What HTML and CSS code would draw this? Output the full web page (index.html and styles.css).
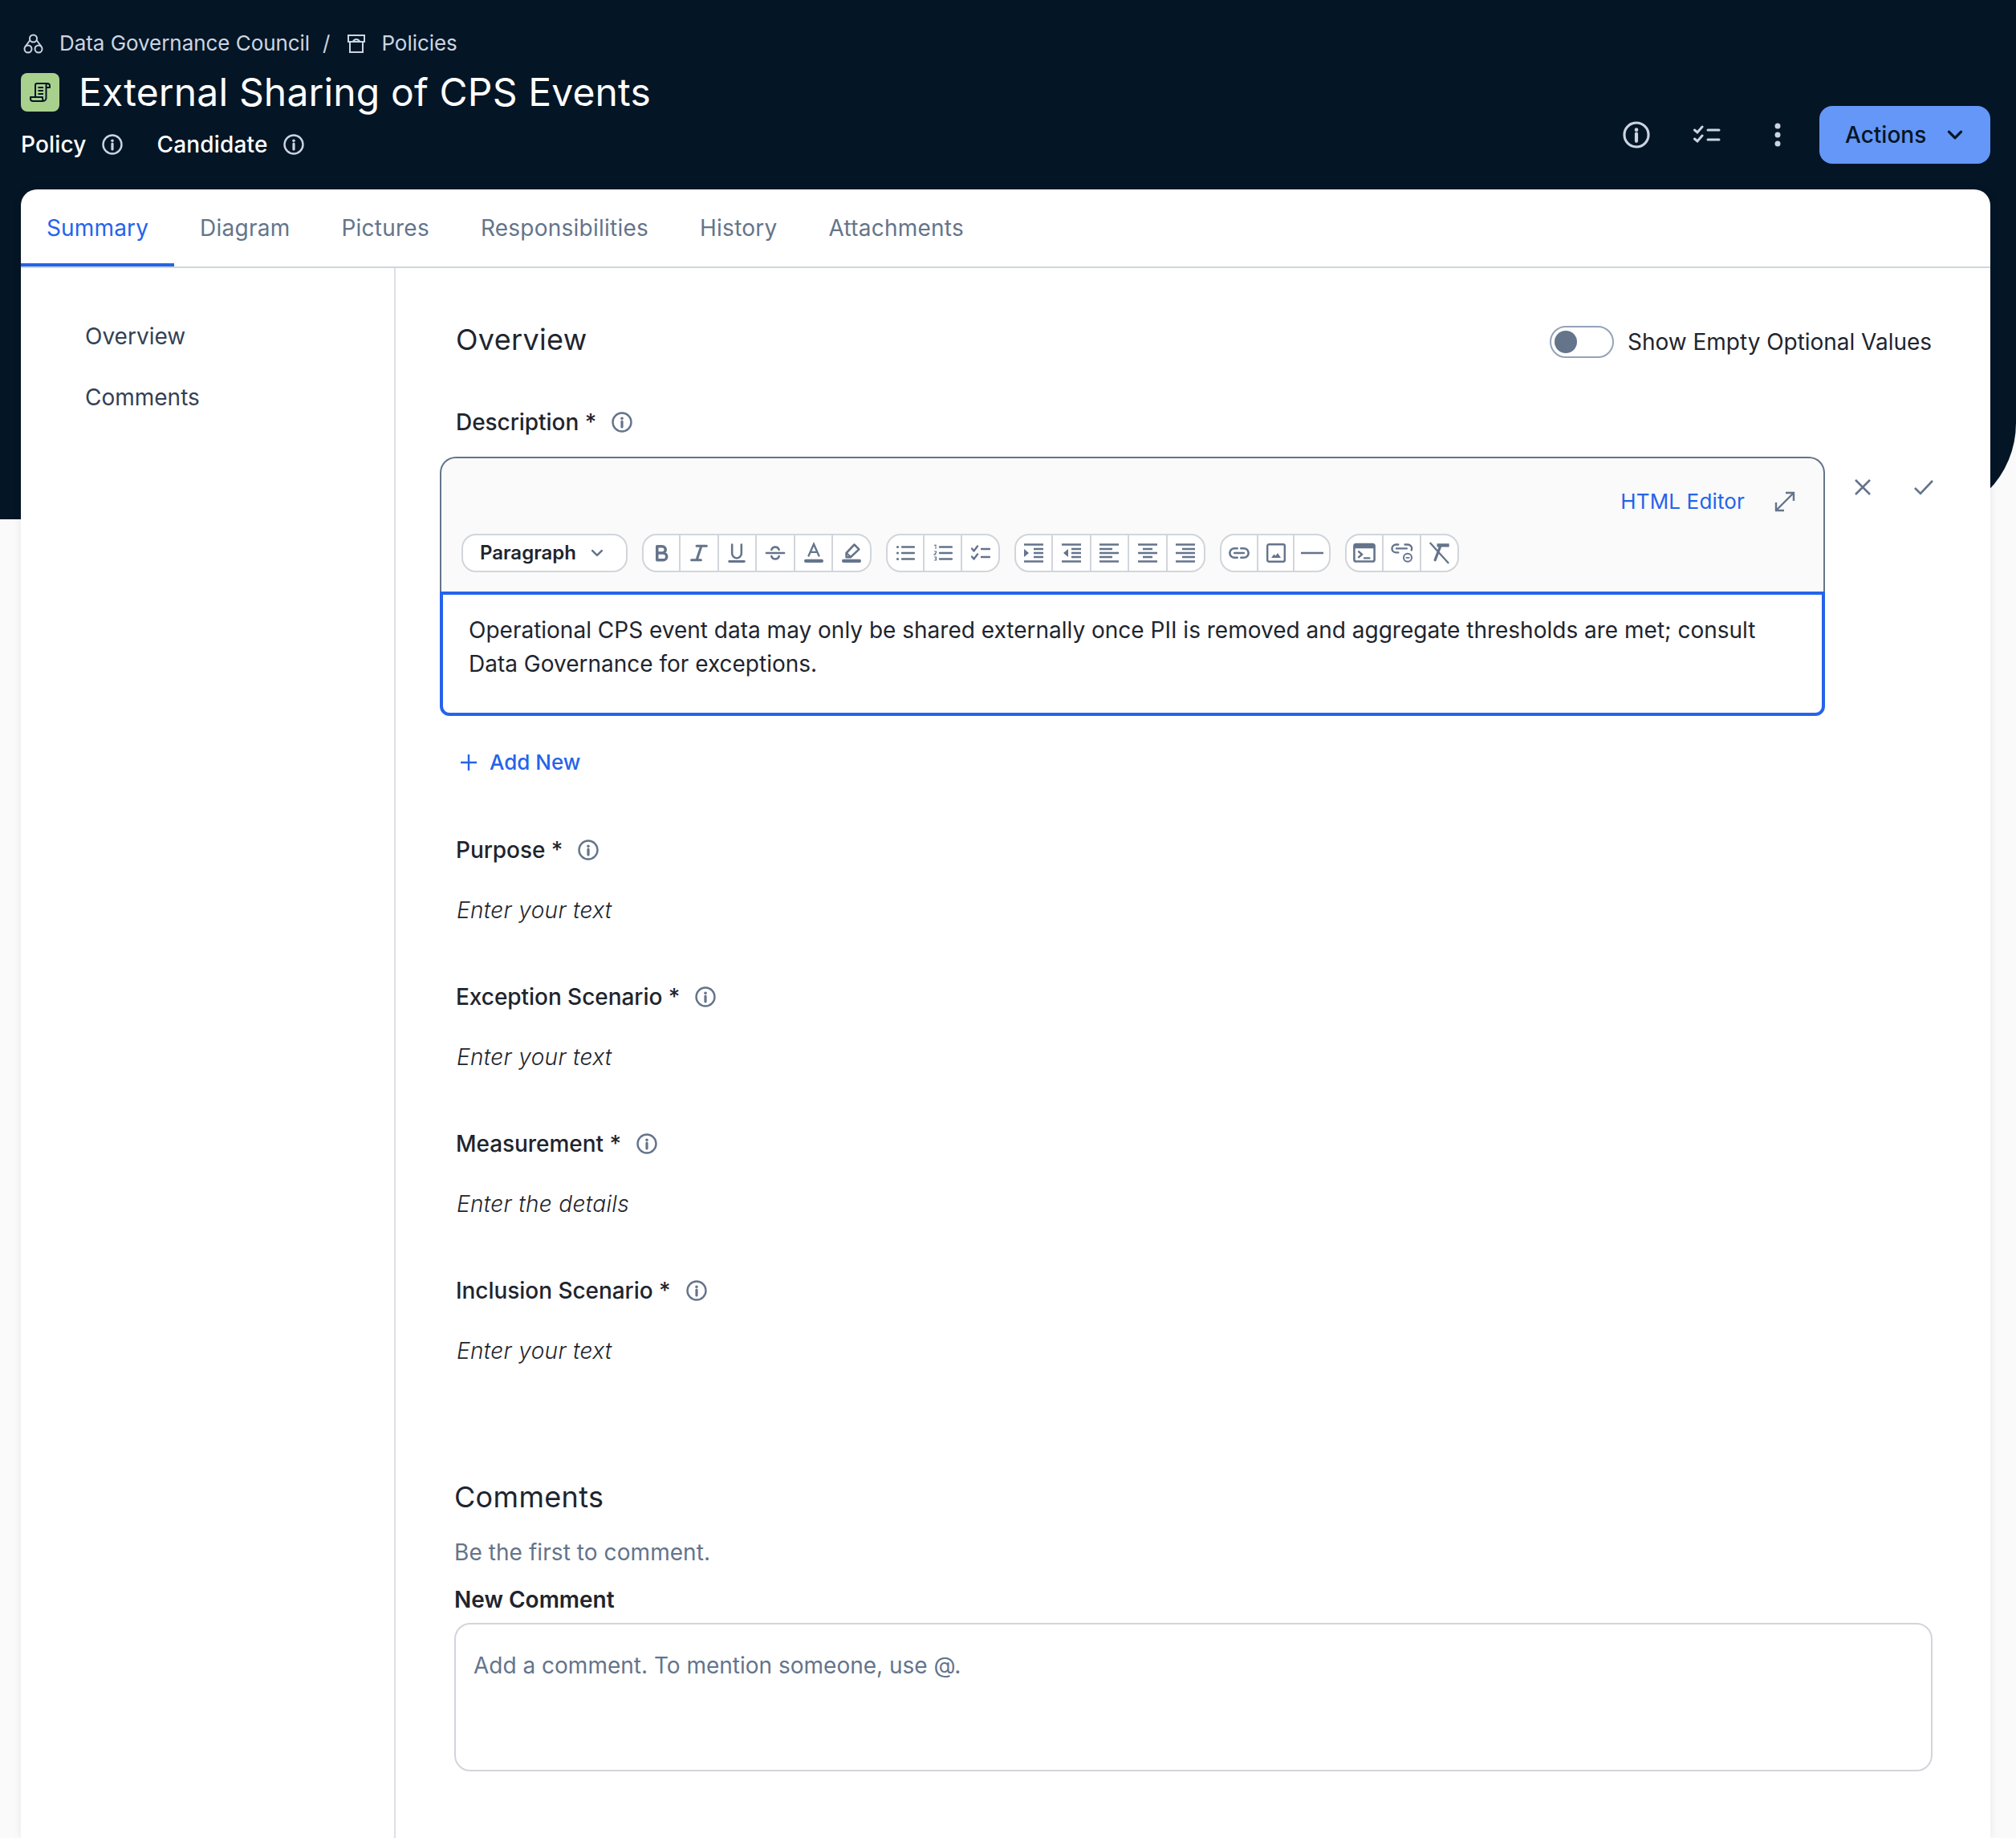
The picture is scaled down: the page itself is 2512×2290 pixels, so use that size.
FILE: index.html
```html
<!DOCTYPE html>
<html lang="en">
<head>
<meta charset="utf-8">
<title>External Sharing of CPS Events</title>
<link rel="stylesheet" href="styles.css">
</head>
<body>
<svg class="defs" width="0" height="0" aria-hidden="true">
  <symbol id="info" viewBox="0 0 26 26"><circle cx="13" cy="13" r="11.5" fill="none" stroke="currentColor" stroke-width="2.4"/><circle cx="13" cy="8.2" r="1.8" fill="currentColor"/><path d="M13 12v7" stroke="currentColor" stroke-width="3.2" stroke-linecap="round" fill="none"/></symbol>
  <symbol id="b" viewBox="0 0 24 24"><path d="M7.5 5H13a3.5 3.5 0 0 1 0 7H7.5zM7.5 12H14a3.6 3.6 0 0 1 0 7.5H7.5z" fill="none" stroke="currentColor" stroke-width="3" stroke-linejoin="round"/></symbol>
  <symbol id="i" viewBox="0 0 24 24"><path d="M9.5 4.5H20M4 19.5h10M14.5 4.5L9.500 19.500" fill="none" stroke="currentColor" stroke-width="2.700" stroke-linecap="round"/></symbol>
  <symbol id="u" viewBox="0 0 24 24"><path d="M7 3v9.500a5 5 0 0 0 10 0V3" fill="none" stroke="currentColor" stroke-width="2.200" stroke-linecap="round"/><path d="M4 21h16" stroke="currentColor" stroke-width="2.400" stroke-linecap="round"/></symbol>
  <symbol id="s" viewBox="0 0 24 24"><path d="M2.500 12h19M8 8.500a4.200 4.200 0 0 1 8 0M8 15.500a4.200 4.200 0 0 0 8 0" fill="none" stroke="currentColor" stroke-width="2.200" stroke-linecap="round"/></symbol>
  <symbol id="tc" viewBox="0 0 24 24"><path d="M6.500 15L12 2.500 17.500 15M8.500 11h7" fill="none" stroke="currentColor" stroke-width="2" stroke-linecap="round"/><path d="M3.500 20.500h17" stroke="currentColor" stroke-width="3.600" stroke-linecap="round"/></symbol>
  <symbol id="hl" viewBox="0 0 24 24"><path d="M15 3l5 5-9 8.500H6.500V12z" fill="none" stroke="currentColor" stroke-width="2.200" stroke-linejoin="round"/><path d="M6.500 12l5 4.500" stroke="currentColor" stroke-width="2"/><path d="M3.500 20.500h17" stroke="currentColor" stroke-width="3.600" stroke-linecap="round"/></symbol>
  <symbol id="ul" viewBox="0 0 24 24"><circle cx="2.500" cy="4.500" r="1.600" fill="currentColor"/><circle cx="2.500" cy="12" r="1.600" fill="currentColor"/><circle cx="2.500" cy="19.500" r="1.600" fill="currentColor"/><path d="M8 4.500H23M8 12H23M8 19.500H23" stroke="currentColor" stroke-width="2.400" stroke-linecap="round"/></symbol>
  <symbol id="ol" viewBox="0 0 24 24"><path d="M1 2.500L3 2v5M1 10h2.500v1.500L1 14h2.500M1 17h2.500v2H2h1.500v2H1" fill="none" stroke="currentColor" stroke-width="1.100"/><path d="M8 4.500H23M8 12H23M8 19.500H23" stroke="currentColor" stroke-width="2.400" stroke-linecap="round"/></symbol>
  <symbol id="cl" viewBox="0 0 24 24"><path d="M1 6.500l2.500 3 4.500-6M1 16.500l2.500 3 4.500-6" fill="none" stroke="currentColor" stroke-width="2.400" stroke-linecap="round" stroke-linejoin="round"/><path d="M13 7H23M13 17H23" stroke="currentColor" stroke-width="2.400" stroke-linecap="round"/></symbol>
  <symbol id="ind" viewBox="0 0 24 24"><path d="M0 1.500h24M12 7h12M12 12h12M12 17h12M0 22.500h24" stroke="currentColor" stroke-width="2.400"/><path d="M0 7l6 5-6 5z" fill="currentColor"/></symbol>
  <symbol id="out" viewBox="0 0 24 24"><path d="M0 1.500h24M12 7h12M12 12h12M12 17h12M0 22.500h24" stroke="currentColor" stroke-width="2.400"/><path d="M8 7l-6 5 6 5z" fill="currentColor"/></symbol>
  <symbol id="al" viewBox="0 0 24 24"><path d="M0 1.500h24M0 7h16M0 12h24M0 17h16M0 22.500h24" stroke="currentColor" stroke-width="2.400"/></symbol>
  <symbol id="ac" viewBox="0 0 24 24"><path d="M0 1.500h24M6 7h12M0 12h24M6 17h12M0 22.500h24" stroke="currentColor" stroke-width="2.400"/></symbol>
  <symbol id="ar" viewBox="0 0 24 24"><path d="M0 1.500h24M8 7h16M0 12h24M8 17h16M0 22.500h24" stroke="currentColor" stroke-width="2.400"/></symbol>
  <symbol id="lnk" viewBox="0 0 24 24"><path d="M10 7H7a5 5 0 0 0 0 10h3M14 7h3a5 5 0 0 1 0 10h-3M7 12h10" fill="none" stroke="currentColor" stroke-width="2.200" stroke-linecap="round"/></symbol>
  <symbol id="img" viewBox="0 0 24 24"><rect x="1.200" y="1.200" width="21.600" height="21.600" rx="2" fill="none" stroke="currentColor" stroke-width="2.400"/><path d="M6 18l3.500-4.500 2 2 2.500-3.500 4 6z" fill="currentColor"/></symbol>
  <symbol id="hr" viewBox="0 0 24 24"><path d="M0 12h24" stroke="currentColor" stroke-width="2.200"/></symbol>
  <symbol id="code" viewBox="0 0 24 24"><rect x="1.200" y="2.500" width="21.600" height="18.500" rx="2" fill="none" stroke="currentColor" stroke-width="2.200"/><path d="M1.500 3.500h21v3.500h-21z" fill="currentColor"/><path d="M6 10.500l3.500 3-3.500 3M12 17.500h5.500" fill="none" stroke="currentColor" stroke-width="2" stroke-linecap="round"/></symbol>
  <symbol id="unl" viewBox="0 0 24 24"><path d="M8 3H5.500a4.200 4.200 0 0 0 0 8.500H8M15 3h3a4.200 4.200 0 0 1 4 6M6 7.200h11" fill="none" stroke="currentColor" stroke-width="2" stroke-linecap="round"/><circle cx="18" cy="17" r="4.300" fill="none" stroke="currentColor" stroke-width="1.700"/><path d="M16 17h4" stroke="currentColor" stroke-width="1.400"/></symbol>
  <symbol id="clr" viewBox="0 0 24 24"><path d="M2 1.500l19 21" stroke="currentColor" stroke-width="2" stroke-linecap="round"/><path d="M9 2h13v3.500H9z" fill="currentColor"/><path d="M12.500 5L7 19.500" stroke="currentColor" stroke-width="2.800" stroke-linecap="round"/></symbol>
  <symbol id="chev" viewBox="0 0 24 24"><path d="M5 8.500l7 7 7-7" fill="none" stroke="currentColor" stroke-width="3" stroke-linecap="round" stroke-linejoin="round"/></symbol>
</svg>

<header class="hero">
  <div class="hero-left">
    <nav class="crumbs">
      <svg class="crumb-ico" viewBox="0 0 25 25" fill="none" stroke="currentColor" stroke-width="2"><circle cx="12.500" cy="6" r="4.500"/><circle cx="6" cy="19" r="4.500"/><circle cx="19" cy="19" r="4.500"/><path d="M8.500 8L2.500 16M16.500 8l6 8"/></svg>
      <span class="crumb-text">Data Governance Council</span>
      <span class="crumb-sep">/</span>
      <svg class="crumb-ico2" viewBox="0 0 22 23" fill="none" stroke="currentColor" stroke-width="2"><path d="M1 1h20v8H1zM3 9v13h16V9M6.500 9q2-3 4.500-3t4.500 3"/></svg>
      <span class="crumb-text">Policies</span>
    </nav>
    <div class="title-row">
      <span class="title-ico"><svg viewBox="0 0 26 24" fill="none" stroke="#041525" stroke-width="2" stroke-linejoin="round"><path d="M7 18V3a2 2 0 0 1 2-2h13a3 3 0 0 1 3 3v2h-4.500V3.500A2.500 2.500 0 0 1 22 1M20.500 5v14a4 4 0 0 1-4 4H4a3 3 0 0 1-3-3v-2h15v1.500a3.500 3.500 0 0 0 1 2.500"/><path d="M10.500 6h6.500M10.500 10h6.500M10.500 14h6.500"/></svg></span>
      <h1 class="title">External Sharing of CPS Events</h1>
    </div>
    <div class="meta">
      <span class="meta-item">Policy</span><svg class="meta-info"><use href="#info"/></svg>
      <span class="meta-item candidate">Candidate</span><svg class="meta-info"><use href="#info"/></svg>
    </div>
  </div>
  <div class="hero-right">
    <svg class="hero-ico info-big"><use href="#info"/></svg>
    <svg class="hero-ico" viewBox="0 0 34 24" fill="none" stroke="currentColor" stroke-width="3" stroke-linecap="round"><path d="M1.500 6l3.500 3 6-7M1.500 17l3.500 3 6-7"/><path d="M18 6h14M18 18h14"/></svg>
    <svg class="hero-dots" viewBox="0 0 8 30" fill="currentColor"><circle cx="4" cy="4" r="3.500"/><circle cx="4" cy="15" r="3.500"/><circle cx="4" cy="26" r="3.500"/></svg>
    <button class="actions" type="button">Actions<svg class="actions-chev"><use href="#chev"/></svg></button>
  </div>
</header>

<main class="card">
  <div class="tabs">
    <a class="tab active">Summary</a>
    <a class="tab">Diagram</a>
    <a class="tab">Pictures</a>
    <a class="tab">Responsibilities</a>
    <a class="tab">History</a>
    <a class="tab">Attachments</a>
  </div>
  <div class="layout">
    <aside class="side">
      <a class="side-link">Overview</a>
      <a class="side-link">Comments</a>
    </aside>
    <div class="content">
      <section class="overview">
        <div class="section-head">
          <h2 class="h2">Overview</h2>
          <div class="show-empty"><span class="toggle"><span class="knob"></span></span><span>Show Empty Optional Values</span></div>
        </div>
        <div class="label desc-label">Description *<svg class="label-info"><use href="#info"/></svg></div>
        <div class="editor-row">
          <div class="editor">
            <div class="editor-head">
              <div class="editor-top">
                <a class="html-link">HTML Editor</a>
                <svg class="expand" viewBox="0 0 26 26" fill="none" stroke="currentColor" stroke-width="2.400"><path d="M2 24L24 2M14 2h10v10M2 14v10h10"/></svg>
              </div>
              <div class="toolbar">
                <button class="para" type="button">Paragraph<svg class="para-chev"><use href="#chev"/></svg></button>
                <div class="group g-format"><span class="btn"><svg class="tico lg"><use href="#b"/></svg></span><span class="btn"><svg class="tico lg"><use href="#i"/></svg></span><span class="btn"><svg class="tico lg"><use href="#u"/></svg></span><span class="btn"><svg class="tico lg"><use href="#s"/></svg></span><span class="btn"><svg class="tico lg"><use href="#tc"/></svg></span><span class="btn"><svg class="tico lg"><use href="#hl"/></svg></span></div>
                <div class="group g-list"><span class="btn"><svg class="tico"><use href="#ul"/></svg></span><span class="btn"><svg class="tico"><use href="#ol"/></svg></span><span class="btn"><svg class="tico"><use href="#cl"/></svg></span></div>
                <div class="group g-align"><span class="btn"><svg class="tico"><use href="#ind"/></svg></span><span class="btn"><svg class="tico"><use href="#out"/></svg></span><span class="btn"><svg class="tico"><use href="#al"/></svg></span><span class="btn"><svg class="tico"><use href="#ac"/></svg></span><span class="btn"><svg class="tico"><use href="#ar"/></svg></span></div>
                <div class="group g-insert"><span class="btn"><svg class="tico lg"><use href="#lnk"/></svg></span><span class="btn"><svg class="tico"><use href="#img"/></svg></span><span class="btn"><svg class="tico lg"><use href="#hr"/></svg></span></div>
                <div class="group g-misc"><span class="btn"><svg class="tico lg"><use href="#code"/></svg></span><span class="btn"><svg class="tico lg"><use href="#unl"/></svg></span><span class="btn"><svg class="tico lg"><use href="#clr"/></svg></span></div>
              </div>
            </div>
            <div class="editor-body">Operational CPS event data may only be shared externally once PII is removed and aggregate thresholds are met; consult Data Governance for exceptions.</div>
          </div>
          <div class="editor-actions">
            <svg class="ea-ico" viewBox="0 0 24 24" fill="none" stroke="currentColor" stroke-width="2.600"><path d="M3 3l18 18M21 3L3 21"/></svg>
            <svg class="ea-ico" viewBox="0 0 24 24" fill="none" stroke="currentColor" stroke-width="2.600"><path d="M1 13l7 7L23 4"/></svg>
          </div>
        </div>
        <a class="add-new"><svg class="plus" viewBox="0 0 22 22" stroke="currentColor" stroke-width="2.400"><path d="M11 1v20M1 11h20"/></svg>Add New</a>
        <div class="field first"><div class="label">Purpose *<svg class="label-info"><use href="#info"/></svg></div><div class="value">Enter your text</div></div>
        <div class="field"><div class="label">Exception Scenario *<svg class="label-info"><use href="#info"/></svg></div><div class="value">Enter your text</div></div>
        <div class="field"><div class="label">Measurement *<svg class="label-info"><use href="#info"/></svg></div><div class="value">Enter the details</div></div>
        <div class="field"><div class="label">Inclusion Scenario *<svg class="label-info"><use href="#info"/></svg></div><div class="value">Enter your text</div></div>
      </section>
      <section class="comments">
        <h2 class="h2">Comments</h2>
        <p class="first-comment">Be the first to comment.</p>
        <div class="new-comment">New Comment</div>
        <div class="comment-box">Add a comment. To mention someone, use @.</div>
      </section>
    </div>
  </div>
</main>
</body>
</html>
```

FILE: styles.css
```css
* { box-sizing: border-box; }
html, body { margin: 0; padding: 0; }
body {
  height: 2290px;
  overflow: hidden;
  background: #fafafa;
  font-family: Inter, "Liberation Sans", sans-serif;
  font-size: 28px;
  line-height: 42px;
  color: #1e252e;
}
.defs { position: absolute; }
.hero {
  height: 647px;
  background: #041525;
  border-bottom-right-radius: 120px;
  padding: 32px 32px 0 26px;
  display: flex;
  justify-content: space-between;
  align-items: flex-start;
  color: #fff;
}
.crumbs { display: flex; align-items: center; height: 42px; margin-top: 1px; color: #cbd5e1; font-size: 26px; font-weight: 400; letter-spacing: -.05px; }
.crumb-ico { width: 25px; height: 25px; margin-left: 3px; margin-right: 20px; }
.crumb-sep { margin: 0 22px 0 16px; }
.crumb-ico2 { width: 22px; height: 23px; margin-right: 20px; }
.title-row { display: flex; align-items: center; margin-top: 10px; height: 60px; }
.title-ico {
  width: 48px; height: 48px;
  background: #a9d18e;
  border-radius: 8px;
  display: flex; align-items: center; justify-content: center;
  margin-right: 24px;
}
.title-ico svg { width: 26px; height: 24px; }
.title { margin: 0; font-size: 48px; line-height: 60px; font-weight: 400; letter-spacing: .16px; }
.meta { display: flex; align-items: center; margin-top: 14px; height: 42px; }
.meta-item { font-weight: 500; letter-spacing: .17px; }
.candidate { margin-left: 43px; }
.meta-info { width: 26px; height: 26px; margin-left: 19px; color: #cbd5e1; }
.hero-right { display: flex; align-items: center; margin-top: 100px; height: 72px; color: #cbd5e1; }
.hero-ico { width: 34px; height: 34px; }
.info-big { margin-right: 54px; }
.hero-dots { width: 8px; height: 30px; margin-left: 67px; margin-right: 48px; }
.actions {
  width: 213px; height: 72px;
  background: #6497f8;
  border: 0;
  border-radius: 16px;
  font: 500 28px/42px Inter, "Liberation Sans", sans-serif;
  color: #041525;
  display: flex; align-items: center; justify-content: space-between;
  padding: 0 31px 0 32px;
}
.actions-chev { width: 26px; height: 26px; }
.card {
  margin: -411px 32px 0 26px;
  height: 2054px;
  background: #fff;
  border-radius: 20px 20px 0 0;
  box-shadow: 0 0 12px rgba(15, 23, 42, .08);
  position: relative;
  display: flex;
  flex-direction: column;
}
.tabs { display: flex; height: 98px; border-bottom: 2px solid #d1d5db; flex: none; }
.tab { height: 96px; padding: 0 32px; color: #64748b; line-height: 96px; letter-spacing: .24px; }
.tab.active { color: #2563eb; border-bottom: 4px solid #2563eb; letter-spacing: .15px; }
.layout { display: flex; flex: 1; }
.side {
  width: 467px; flex: none;
  border-right: 2px solid #dcdfe4;
  padding: 64px 0 0 80px;
  display: flex; flex-direction: column; gap: 34px;
}
.side-link { color: #334155; }
.content { flex: 1; padding: 62px 74px 0 75px; }
.section-head { display: flex; justify-content: space-between; align-items: center; height: 54px; }
.h2 { margin: 0; font-size: 36px; line-height: 54px; font-weight: 400; letter-spacing: .32px; }
.show-empty { display: flex; align-items: center; gap: 17px; margin: 6px 2px 0 0; letter-spacing: -.03px; }
.toggle {
  width: 80px; height: 40px;
  border: 2px solid #94a3b8;
  border-radius: 20px;
  padding: 4px;
  display: block;
}
.knob { display: block; width: 28px; height: 28px; border-radius: 50%; background: #64748b; }
.label { display: flex; align-items: center; font-weight: 500; height: 42px; letter-spacing: -.05px; }
.label-info { width: 26px; height: 26px; margin-left: 19px; color: #64748b; }
.desc-label { margin-top: 55px; }
.editor-row { display: flex; margin: 22px 0 0 -20px; }
.editor { width: 1726px; flex: none; }
.editor-head {
  height: 168px;
  background: #fafafa;
  border: 2px solid #64748b;
  border-bottom: 0;
  border-radius: 20px 20px 0 0;
  padding: 33px 35px 0 25px;
}
.editor-top { display: flex; justify-content: flex-end; align-items: center; height: 42px; gap: 37px; }
.html-link { color: #2563eb; font-size: 26px; letter-spacing: .15px; }
.expand { width: 26px; height: 26px; color: #64748b; }
.toolbar { display: flex; gap: 18px; margin-top: 19px; }
.para {
  width: 207px; height: 48px;
  background: #fff;
  border: 2px solid #d1d5db;
  border-radius: 18px;
  font: 600 24px/36px Inter, "Liberation Sans", sans-serif;
  color: #1e252e;
  display: flex; align-items: center; justify-content: space-between;
  padding: 0 26px 0 21px;
}
.para-chev { width: 20px; height: 20px; color: #64748b; }
.group {
  display: flex; height: 48px;
  background: #fff;
  border: 2px solid #d1d5db;
  border-radius: 18px;
  overflow: hidden;
}
.g-format { width: 286px; }
.g-list { width: 142px; }
.g-align { width: 238px; }
.g-insert { width: 138px; }
.g-misc { width: 142px; }
.btn {
  flex: 1; height: 100%;
  display: flex; align-items: center; justify-content: center;
  border-left: 2px solid #d1d5db;
  color: #64748b;
}
.btn:first-child { flex: 0 0 44px; border-left: 0; }
.tico { width: 24px; height: 24px; }
.tico.lg { width: 28px; height: 28px; }
.editor-body {
  height: 155px;
  border: 4px solid #2563eb;
  border-radius: 0 0 12px 12px;
  padding: 23px 32px 0 32px;
  background: #fff;
}
.editor-actions { display: flex; gap: 52px; padding: 26px 0 0 35px; color: #64748b; }
.ea-ico { width: 24px; height: 24px; }
.add-new {
  display: flex; align-items: center; gap: 15px;
  margin: 37px 0 0 5px;
  height: 42px;
  font-size: 26px;
  color: #2563eb;
  font-weight: 500;
}
.plus { width: 22px; height: 22px; }
.field { margin-top: 66px; }
.field.first { margin-top: 67px; }
.value { margin-top: 33px; font-style: italic; font-weight: 300; color: #1e252e; padding-left: 1px; letter-spacing: .35px; }
.comments { margin: 134px 0 0 -2px; }
.first-comment { margin: 21px 0 0; color: #64748b; letter-spacing: .07px; }
.new-comment { margin-top: 17px; font-weight: 600; }
.comment-box {
  margin-top: 8px;
  width: 1842px; height: 185px;
  border: 2px solid #d1d5db;
  border-radius: 20px;
  padding: 30px 22px;
  color: #64748b;
}
```
